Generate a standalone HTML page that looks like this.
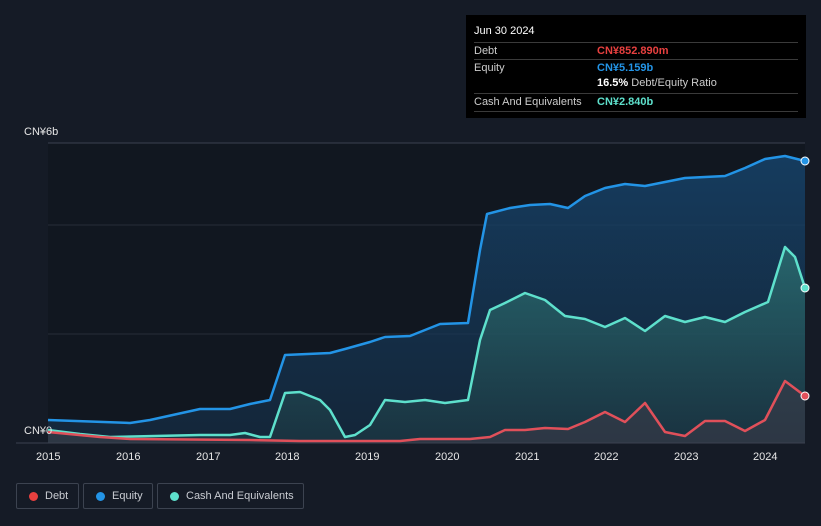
<!DOCTYPE html>
<html><head><style>
body{margin:0;width:821px;height:526px;background:#151b26;font-family:"Liberation Sans",sans-serif;overflow:hidden;position:relative}
.tt{position:absolute;left:466px;top:15px;width:340px;height:103px;background:#000;color:#ccc;font-size:11px}
.tt .h{position:absolute;left:8px;top:10px;color:#fff;font-size:11px}
.row{position:absolute;left:8px;width:324px;border-top:1px solid #3a3a3a;height:16px}
.row span{position:absolute;top:2px}
.lg{position:absolute;top:483px;height:26px;border:1px solid #3c4350;border-radius:2px;color:#c9ccd2;font-size:11px;box-sizing:border-box}
.lg i{position:absolute;left:12px;top:8px;width:9px;height:9px;border-radius:50%}
.lg span{position:absolute;left:28px;top:6px}
.yr{position:absolute;top:451px;color:#e6e6e6;font-size:11px}
</style></head><body>
<svg width="821" height="526" style="position:absolute;left:0;top:0">
<defs>
<linearGradient id="ge" x1="0" y1="0" x2="0" y2="1"><stop offset="0" stop-color="#16456e" stop-opacity=".8"/><stop offset="1" stop-color="#16304a" stop-opacity=".6"/></linearGradient>
<linearGradient id="gc" x1="0" y1="0" x2="0" y2="1"><stop offset="0" stop-color="#2f7a78" stop-opacity=".7"/><stop offset="1" stop-color="#1d3a44" stop-opacity=".6"/></linearGradient>
</defs>
<rect x="48" y="143" width="757" height="300" fill="#111720"/>
<line x1="48" y1="143" x2="805" y2="143" stroke="#3a4150"/>
<line x1="48" y1="225" x2="805" y2="225" stroke="#262d38"/>
<line x1="48" y1="334" x2="805" y2="334" stroke="#262d38"/>
<polygon fill="url(#ge)" points="48,443 48,420 130,423 150,420 200,409 230,409 250,404 270,400 285,355 330,353 345,349 370,342 385,337 410,336 440,324 468,323 480,250 487,214 510,208 530,205 550,204 568,208 585,196 605,188 625,184 645,186 665,182 685,178 725,176 745,168 765,159 785,156 805,161 805,443"/>
<polygon fill="url(#gc)" points="48,443 48,430 80,434 110,437 200,435 230,435 245,433 260,437 270,437 285,393 300,392 320,400 330,410 345,437 355,435 370,425 385,400 405,402 425,400 445,403 468,400 480,340 490,310 505,303 525,293 545,300 565,316 585,319 605,327 625,318 645,331 665,316 685,322 705,317 725,322 745,312 768,302 785,247 795,257 805,288 805,443"/>
<polygon fill="#3a3a48" opacity=".6" points="48,443 48,432 100,437 130,439 250,440 300,441 400,441 420,439 470,439 490,437 505,430 525,430 545,428 568,429 585,422 605,412 625,422 645,403 665,432 685,436 705,421 725,421 745,431 765,420 785,381 805,396 805,443"/>
<polyline fill="none" stroke="#2394e6" stroke-width="2.5" stroke-linejoin="round" points="48,420 130,423 150,420 200,409 230,409 250,404 270,400 285,355 330,353 345,349 370,342 385,337 410,336 440,324 468,323 480,250 487,214 510,208 530,205 550,204 568,208 585,196 605,188 625,184 645,186 665,182 685,178 725,176 745,168 765,159 785,156 805,161"/>
<polyline fill="none" stroke="#5ee0cc" stroke-width="2.5" stroke-linejoin="round" points="48,430 80,434 110,437 200,435 230,435 245,433 260,437 270,437 285,393 300,392 320,400 330,410 345,437 355,435 370,425 385,400 405,402 425,400 445,403 468,400 480,340 490,310 505,303 525,293 545,300 565,316 585,319 605,327 625,318 645,331 665,316 685,322 705,317 725,322 745,312 768,302 785,247 795,257 805,288"/>
<polyline fill="none" stroke="#e0505a" stroke-width="2.5" stroke-linejoin="round" points="48,432 100,437 130,439 250,440 300,441 400,441 420,439 470,439 490,437 505,430 525,430 545,428 568,429 585,422 605,412 625,422 645,403 665,432 685,436 705,421 725,421 745,431 765,420 785,381 805,396"/>
<line x1="16" y1="443" x2="805" y2="443" stroke="#3a4150"/>
<circle cx="805" cy="161" r="4" fill="#2394e6" stroke="#fff" stroke-width="1"/>
<circle cx="805" cy="288" r="4" fill="#5ee0cc" stroke="#fff" stroke-width="1"/>
<circle cx="805" cy="396" r="4" fill="#e0505a" stroke="#fff" stroke-width="1"/>
</svg>
<div style="position:absolute;left:24px;top:126px;color:#e6e6e6;font-size:11px">CN¥6b</div>
<div style="position:absolute;left:24px;top:425px;color:#e6e6e6;font-size:11px">CN¥0</div>
<div class="yr" style="left:36px">2015</div><div class="yr" style="left:116px">2016</div><div class="yr" style="left:196px">2017</div><div class="yr" style="left:275px">2018</div><div class="yr" style="left:355px">2019</div><div class="yr" style="left:435px">2020</div><div class="yr" style="left:515px">2021</div><div class="yr" style="left:594px">2022</div><div class="yr" style="left:674px">2023</div><div class="yr" style="left:753px">2024</div>
<div class="tt">
<div class="h">Jun 30 2024</div>
<div class="row" style="top:27px"><span style="left:0">Debt</span><span style="left:123px;color:#e8403f;font-weight:bold">CN¥852.890m</span></div>
<div class="row" style="top:44px"><span style="left:0">Equity</span><span style="left:123px;color:#2394e6;font-weight:bold">CN¥5.159b</span></div>
<div style="position:absolute;left:131px;top:62px"><b style="color:#fff">16.5%</b> Debt/Equity Ratio</div>
<div class="row" style="top:78px;height:17px;border-bottom:1px solid #3a3a3a"><span style="left:0">Cash And Equivalents</span><span style="left:123px;color:#5ee0cc;font-weight:bold">CN¥2.840b</span></div>
</div>
<div class="lg" style="left:16px;width:63px"><i style="background:#e8403f"></i><span>Debt</span></div>
<div class="lg" style="left:83px;width:70px"><i style="background:#2394e6"></i><span>Equity</span></div>
<div class="lg" style="left:157px;width:147px"><i style="background:#5ee0cc"></i><span>Cash And Equivalents</span></div>
</body></html>
